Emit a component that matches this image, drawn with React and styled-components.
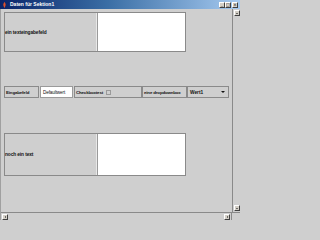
import React from "react";
import styled, { createGlobalStyle } from "styled-components";

const Global = createGlobalStyle`
  html, body { margin: 0; padding: 0; background: #cfcfcf; }
  * { box-sizing: border-box; }
`;

const Win = styled.div`
  width: 240px;
  height: 220px;
  display: flex;
  flex-direction: column;
  background: #cfcfcf;
  font-family: "Liberation Sans", Arial, sans-serif;
  overflow: hidden;
`;

const TitleBar = styled.div`
  height: 9px;
  display: flex;
  align-items: center;
  padding: 0 2px;
  gap: 3px;
  background: linear-gradient(to right, #0a246a 0%, #3a6ea5 45%, #a6caf0 100%);
`;

const TitleText = styled.span`
  color: #fff;
  font-size: 5px;
  font-weight: bold;
  line-height: 1;
  white-space: nowrap;
  flex: 1;
`;

const WinBtns = styled.div`
  display: flex;
`;

const WinBtn = styled.div`
  width: 6px;
  height: 6px;
  background: #d4d0c8;
  border: 1px solid;
  border-color: #fff #404040 #404040 #fff;
  margin-left: ${(p) => (p.$gap ? "1px" : "0")};
  display: flex;
  align-items: center;
  justify-content: center;
`;

const Main = styled.div`
  flex: 1;
  display: flex;
  flex-direction: column;
  border-left: 1px solid #a0a0a0;
`;

const Middle = styled.div`
  flex: 1;
  display: flex;
  min-height: 0;
`;

const Content = styled.div`
  flex: 1;
  padding: 3px 0 0 3px;
  display: flex;
  flex-direction: column;
`;

const Panel = styled.div`
  width: 182px;
  height: ${(p) => p.$h}px;
  margin-top: ${(p) => p.$mt}px;
  border: 1px solid #8a8a8a;
  display: grid;
  grid-template-columns: 92px 1fr;
`;

const PanelLabel = styled.div`
  display: flex;
  align-items: center;
  font-size: 4.8px;
  font-weight: bold;
  letter-spacing: -0.1px;
  color: #111;
  white-space: nowrap;
  border-right: 1px solid #e8e8e8;
`;

const WhiteArea = styled.div`
  background: #fff;
  border-left: 1px solid #9a9a9a;
`;

const Row = styled.div`
  margin-top: ${(p) => p.$mt}px;
  height: 12px;
  display: flex;
  align-items: stretch;
  width: 225px;
`;

const BoxLabel = styled.div`
  width: ${(p) => p.$w}px;
  margin-right: ${(p) => p.$mr || 0}px;
  border: 1px solid #8a8a8a;
  display: flex;
  align-items: center;
  padding-left: 1px;
  font-size: 4.4px;
  font-weight: bold;
  letter-spacing: -0.15px;
  color: #111;
  white-space: nowrap;
  overflow: hidden;
  gap: 3px;
`;

const TextField = styled.div`
  width: 33px;
  margin-right: 1px;
  background: #fff;
  border: 1px solid #9a9a9a;
  display: flex;
  align-items: center;
  padding-left: 2px;
  font-size: 4.6px;
  letter-spacing: -0.1px;
  color: #111;
  white-space: nowrap;
`;

const Check = styled.span`
  width: 5px;
  height: 5px;
  border: 1px solid #9a9a9a;
  background: #cfcfcf;
  display: inline-block;
  flex-shrink: 0;
`;

const Dropdown = styled.div`
  flex: 1;
  border: 1px solid #8a8a8a;
  display: flex;
  align-items: center;
  justify-content: space-between;
  padding: 0 3px 0 2px;
  font-size: 4.8px;
  font-weight: bold;
  color: #111;
`;

const Arrow = styled.span`
  width: 0;
  height: 0;
  border-left: 2px solid transparent;
  border-right: 2px solid transparent;
  border-top: 2px solid #111;
`;

const VScroll = styled.div`
  width: 8px;
  border-left: 1px solid #8a8a8a;
  display: flex;
  flex-direction: column;
  justify-content: space-between;
  padding: 1px 0 1px 1px;
`;

const HScroll = styled.div`
  height: 8px;
  display: flex;
  border-top: 1px solid #8a8a8a;
`;

const HTrack = styled.div`
  flex: 1;
  display: flex;
  justify-content: space-between;
  align-items: center;
  padding: 0 1px;
  border-right: 1px solid #8a8a8a;
`;

const Corner = styled.div`
  width: 8px;
`;

const SBtn = styled.div`
  width: 6px;
  height: 6px;
  background: #d4d0c8;
  border: 1px solid;
  border-color: #fff #404040 #404040 #fff;
  display: flex;
  align-items: center;
  justify-content: center;
`;

const Tri = styled.span`
  width: 0;
  height: 0;
  ${(p) =>
    p.$dir === "up"
      ? "border-left:1.5px solid transparent;border-right:1.5px solid transparent;border-bottom:1.5px solid #000;"
      : p.$dir === "down"
      ? "border-left:1.5px solid transparent;border-right:1.5px solid transparent;border-top:1.5px solid #000;"
      : p.$dir === "left"
      ? "border-top:1.5px solid transparent;border-bottom:1.5px solid transparent;border-right:1.5px solid #000;"
      : "border-top:1.5px solid transparent;border-bottom:1.5px solid transparent;border-left:1.5px solid #000;"}
`;

const Glyph = styled.span`
  font-size: 4px;
  line-height: 1;
  color: #000;
  font-family: "DejaVu Sans", sans-serif;
`;

export default function App() {
  return (
    <>
      <Global />
      <Win>
        <TitleBar>
          <svg width="5" height="6" viewBox="0 0 5 6">
            <path d="M2.5 0 C3.5 1.5 4.5 2.5 2.5 6 C0.5 2.5 1.5 1.5 2.5 0Z" fill="#e0502a" />
          </svg>
          <TitleText>Daten für Sektion1</TitleText>
          <WinBtns>
            <WinBtn><Glyph>_</Glyph></WinBtn>
            <WinBtn><Glyph>□</Glyph></WinBtn>
            <WinBtn $gap><Glyph>×</Glyph></WinBtn>
          </WinBtns>
        </TitleBar>
        <Main>
          <Middle>
            <Content>
              <Panel $h={40} $mt={0}>
                <PanelLabel>ein texteingabefeld</PanelLabel>
                <WhiteArea />
              </Panel>
              <Row $mt={34}>
                <BoxLabel $w={35} $mr={1}>Eingabefeld</BoxLabel>
                <TextField>Defaultwert</TextField>
                <BoxLabel $w={68}>Checkboxtest <Check /></BoxLabel>
                <BoxLabel $w={45}>eine dropdownbox</BoxLabel>
                <Dropdown>Wert1<Arrow /></Dropdown>
              </Row>
              <Panel $h={43} $mt={35}>
                <PanelLabel>noch ein text</PanelLabel>
                <WhiteArea />
              </Panel>
            </Content>
            <VScroll>
              <SBtn><Tri $dir="up" /></SBtn>
              <SBtn><Tri $dir="down" /></SBtn>
            </VScroll>
          </Middle>
          <HScroll>
            <HTrack>
              <SBtn><Tri $dir="left" /></SBtn>
              <SBtn><Tri $dir="right" /></SBtn>
            </HTrack>
            <Corner />
          </HScroll>
        </Main>
      </Win>
    </>
  );
}
